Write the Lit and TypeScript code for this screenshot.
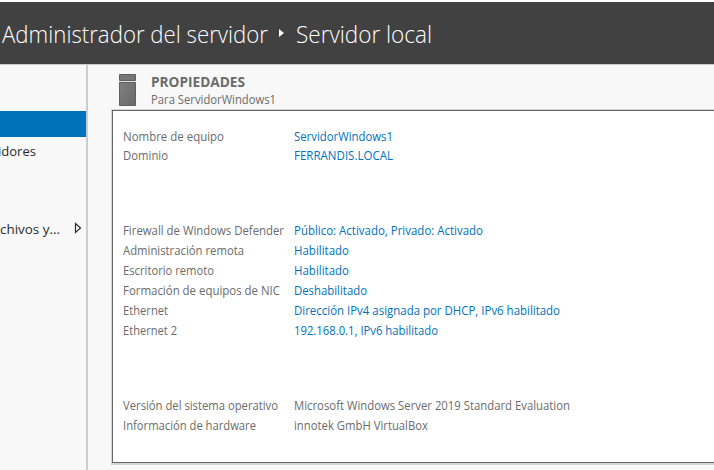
import {LitElement, html, css, svg} from "lit";
import {customElement} from "lit/decorators.js";

type Row = {label: string; value: string; w: number; vw: number; link: boolean};
const row = (label: string, w: number, value: string, vw: number, link = true): Row => ({label, w, value, vw, link});
const groups: Row[][] = [
  [row("Nombre de equipo", 101, "ServidorWindows1", 99), row("Dominio", 45, "FERRANDIS.LOCAL", 99)],
  [
    row("Firewall de Windows Defender", 161, "Público: Activado, Privado: Activado", 189),
    row("Administración remota", 121, "Habilitado", 55),
    row("Escritorio remoto", 91, "Habilitado", 55),
    row("Formación de equipos de NIC", 157, "Deshabilitado", 73),
    row("Ethernet", 45, "Dirección IPv4 asignada por DHCP, IPv6 habilitado", 266),
    row("Ethernet 2", 54, "192.168.0.1, IPv6 habilitado", 144),
  ],
  [
    row("Versión del sistema operativo", 155, "Microsoft Windows Server 2019 Standard Evaluation", 276, false),
    row("Información de hardware", 133, "innotek GmbH VirtualBox", 134, false),
  ],
];

const fit = (text: string, width: number, size: number) => html`<svg class="fit" width=${width} height=${Math.ceil(size) + 5}>
  ${svg`<text x="0" y=${Math.ceil(size) + 2} font-size=${size} textLength=${width} lengthAdjust="spacingAndGlyphs">${text}</text>`}
</svg>`;

@customElement("app-root")
export class AppRoot extends LitElement {
  static styles = css`
    :host { display: flex; flex-direction: column; width: 714px; height: 470px; overflow: hidden; background: #f8f8f8; font-family: "Open Sans", "Noto Sans", sans-serif; color: #6b6b6b; }
    * { box-sizing: border-box; }
    .fit { display: block; flex: none; overflow: visible; fill: currentColor; }
    header { height: 65px; flex: none; border-top: 2px solid #fff; border-bottom: 1px solid #ccc; background: #414141; color: #fff; font-weight: 300; display: flex; align-items: flex-start; padding: 16px 0 0 2px; }
    .arrow { margin: 11px 11px 0 11px; }
    .body { display: flex; flex: 1; min-height: 0; }
    nav { flex: none; width: 88px; border-right: 2px solid #ccc; padding-top: 46px; color: #2b2b2b; }
    .selected { height: 26px; width: 86px; background: #0072bc; }
    .item { height: 26px; display: flex; align-items: center; }
    .cut { margin-left: -2px; }
    .last { margin-top: 52px; justify-content: space-between; padding-right: 4px; }
    main { flex: 1; padding-left: 23px; }
    .title { display: flex; height: 44px; padding: 9px 0 0 8px; gap: 15px; }
    .heading { font-weight: 700; margin-top: -3px; }
    .panel { width: 620px; height: 356px; border: 1px solid #d4d4d4; border-bottom-width: 2px; background: #fff; }
    .sheet { height: 353px; border: 1px solid #666; padding: 16px 0 0 10px; }
    .group { margin-bottom: 55px; }
    .row { display: grid; grid-template-columns: 171px 1fr; height: 20px; }
    .group:first-child .row:first-child { height: 19px; }
    .link { color: #0072bc; }
  `;
  render() {
    return html`
      <header>${fit("Administrador del servidor", 266, 23)}
        <svg class="arrow" width="6" height="8"><path d="M0 0L5 4L0 8Z" fill="#fff"/></svg>
        ${fit("Servidor local", 136, 23)}</header>
      <div class="body">
        <nav><div class="selected"></div><div class="item cut">${fit("idores", 38, 13)}</div>
          <div class="item last">${fit("chivos y...", 60, 13)}<svg width="8" height="12"><path d="M1.5 1.5L6.5 6L1.5 10.5Z" fill="none" stroke="#2b2b2b" stroke-width="1.2"/></svg></div></nav>
        <main>
          <div class="title">
            <svg width="17" height="32">
              <defs><linearGradient id="g" x1="0" y1="0" x2="1" y2="1"><stop offset="0" stop-color="#808080"/><stop offset="1" stop-color="#686868"/></linearGradient></defs>
              <path d="M.5.5H16.5V6.5H.5Z" fill="#777" stroke="#606060"/>
              <path d="M0 7H17V8H0Z" fill="#ddd"/>
              <path d="M.5 8.5H16.5V31.5H.5Z" fill="url(#g)" stroke="#606060"/>
            </svg>
            <div><div class="heading">${fit("PROPIEDADES", 94, 13.5)}</div><div>${fit("Para ServidorWindows1", 125, 12)}</div></div>
          </div>
          <section class="panel"><div class="sheet">${groups.map((g) => html`<div class="group">${g.map((r) => html`<div class="row">${fit(r.label, r.w, 12)}<span class=${r.link ? "link" : ""}>${fit(r.value, r.vw, 12)}</span></div>`)}</div>`)}</div></section>
        </main>
      </div>`;
  }
}
